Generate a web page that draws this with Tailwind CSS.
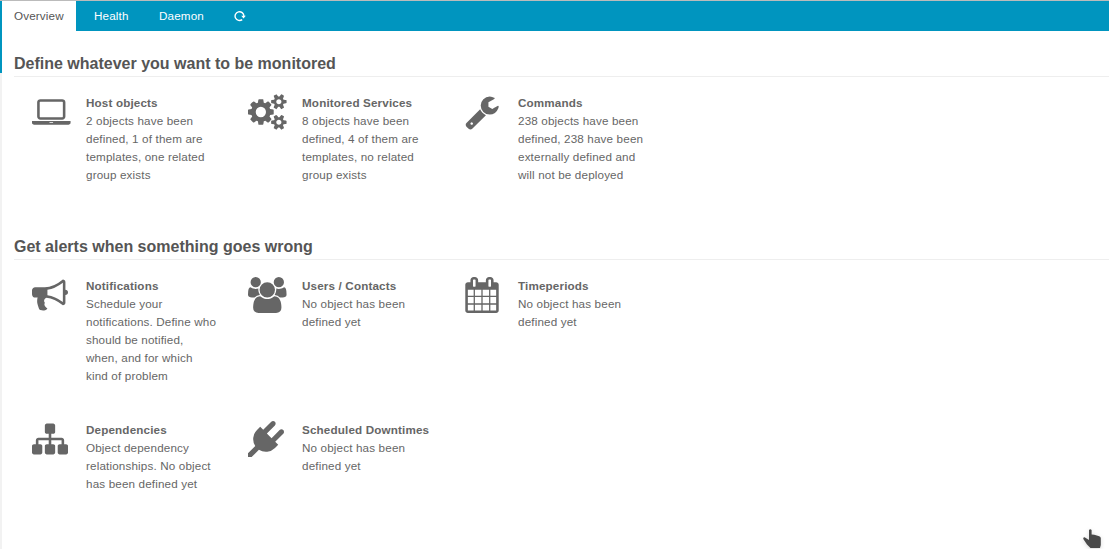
<!DOCTYPE html>
<html lang="en">
<head>
<meta charset="utf-8">
<title>Director</title>
<script src="https://cdn.jsdelivr.net/npm/@tailwindcss/browser@4"></script>
</head>
<body class="relative h-[549px] w-[1109px] overflow-hidden bg-white font-['Liberation_Sans',Arial,sans-serif] text-[#666]">
<div class="flex h-[549px] border-t border-[#bbb]">
  <div class="flex w-[2px] shrink-0 flex-col">
    <div class="h-[72px] bg-[#0095bf]"></div>
    <div class="grow bg-[#f2f2f2]"></div>
  </div>
  <div class="grow">
    <nav class="flex h-[30px] bg-[#0095bf] text-[11.67px] leading-[30px] tracking-[0.15px] text-white">
      <span class="w-[74px] bg-white pl-3 text-[#555]">Overview</span>
      <span class="w-[65px] pl-[18px]">Health</span>
      <span class="w-[75px] pl-[18px]">Daemon</span>
      <span class="flex w-12 items-center pl-[18px]">
        <svg class="h-3 w-3" viewBox="0 0 12 12" fill="none"><path d="M8.2 9.6A4.4 4.4 0 1 1 9.9 6" stroke="#fff" stroke-width="1.4"/><path d="M7.2 5.8h4.6L9.5 8.4z" fill="#fff"/></svg>
      </span>
    </nav>
    <main class="pl-3 text-[11.67px] leading-[18px] tracking-[0.15px]">
      <h2 class="h-[46px] border-b border-[#eee] pt-[23px] text-[16px] leading-[20px] font-bold tracking-normal text-[#555]">Define whatever you want to be monitored</h2>
      <div class="flex pt-[17px] pl-[18px]">
        <section class="flex h-36 w-[216px]">
          <div class="w-[54px] shrink-0"><svg class="h-9 w-[38.57px]" viewBox="64 0 1920 1792" fill="#666"><path d="M480 1280q-66 0-113-47t-47-113v-704q0-66 47-113t113-47h1088q66 0 113 47t47 113v704q0 66-47 113t-113 47h-1088zm-32-864v704q0 13 9.5 22.5t22.5 9.5h1088q13 0 22.5-9.5t9.5-22.5v-704q0-13-9.5-22.5t-22.5-9.5h-1088q-13 0-22.5 9.5t-9.5 22.5zm1376 928h160v96q0 40-47 68t-113 28h-1600q-66 0-113-28t-47-68v-96h1760zm-720 96q16 0 16-16t-16-16h-160q-16 0-16 16t16 16h160z"/></svg></div>
          <p class="whitespace-nowrap"><b>Host objects</b><br>2 objects have been<br>defined, 1 of them are<br>templates, one related<br>group exists</p>
        </section>
        <section class="flex h-36 w-[216px]">
          <div class="w-[54px] shrink-0"><svg class="h-9 w-[38.57px]" viewBox="0 0 1920 1792" fill="#666"><path d="M896 896q0-106-75-181t-181-75-181 75-75 181 75 181 181 75 181-75 75-181zm768 512q0-52-38-90t-90-38-90 38-38 90q0 53 37.5 90.5t90.5 37.5 90.5-37.5 37.5-90.5zm0-1024q0-52-38-90t-90-38-90 38-38 90q0 53 37.5 90.5t90.5 37.5 90.5-37.5 37.5-90.5zm-384 421v185q0 10-7 19.5t-16 10.5l-155 24q-11 35-32 76 34 48 90 115 7 11 7 20 0 12-7 19-23 30-82.5 89.5t-78.5 59.5q-11 0-21-7l-115-90q-37 19-77 31-11 108-23 155-7 24-30 24h-186q-11 0-20-7.5t-10-17.5l-23-153q-34-10-75-31l-118 89q-7 7-20 7-11 0-21-8-144-133-144-160 0-9 7-19 10-14 41-53t47-61q-23-44-35-82l-152-24q-10-1-17-9.5t-7-19.5v-185q0-10 7-19.5t16-10.5l155-24q11-35 32-76-34-48-90-115-7-11-7-20 0-12 7-20 22-30 82-89t79-59q11 0 21 7l115 90q34-18 77-32 11-108 23-154 7-24 30-24h186q11 0 20 7.5t10 17.5l23 153q34 10 75 31l118-89q8-7 20-7 11 0 21 8 144 133 144 160 0 8-7 19-12 16-42 54t-45 60q23 48 34 82l152 23q10 2 17 10.5t7 19.5zm640 533v140q0 16-149 31-12 27-30 52 51 113 51 138 0 4-4 7-122 71-124 71-8 0-46-47t-52-68q-20 2-30 2t-30-2q-14 21-52 68t-46 47q-2 0-124-71-4-3-4-7 0-25 51-138-18-25-30-52-149-15-149-31v-140q0-16 149-31 13-29 30-52-51-113-51-138 0-4 4-7 4-2 35-20t59-34 30-16q8 0 46 46.5t52 67.5q20-2 30-2t30 2q51-71 92-112l6-2q4 0 124 70 4 3 4 7 0 25-51 138 17 23 30 52 149 15 149 31zm0-1024v140q0 16-149 31-12 27-30 52 51 113 51 138 0 4-4 7-122 71-124 71-8 0-46-47t-52-68q-20 2-30 2t-30-2q-14 21-52 68t-46 47q-2 0-124-71-4-3-4-7 0-25 51-138-18-25-30-52-149-15-149-31v-140q0-16 149-31 13-29 30-52-51-113-51-138 0-4 4-7 4-2 35-20t59-34 30-16q8 0 46 46.5t52 67.5q20-2 30-2t30 2q51-71 92-112l6-2q4 0 124 70 4 3 4 7 0 25-51 138 17 23 30 52 149 15 149 31z"/></svg></div>
          <p class="whitespace-nowrap"><b>Monitored Services</b><br>8 objects have been<br>defined, 4 of them are<br>templates, no related<br>group exists</p>
        </section>
        <section class="flex h-36 w-[216px]">
          <div class="w-[54px] shrink-0"><svg class="h-9 w-9" viewBox="0 0 1792 1792" fill="#666"><path d="M448 1472q0-26-19-45t-45-19-45 19-19 45 19 45 45 19 45-19 19-45zm644-420l-682 682q-37 37-90 37-52 0-91-37l-106-108q-38-36-38-90 0-53 38-91l681-681q39 98 114.5 173.5t173.5 114.5zm634-435q0 39-23 106-47 134-164.5 217.5t-258.5 83.5q-185 0-316.5-131.5t-131.5-316.5 131.5-316.5 316.5-131.5q58 0 121.5 16.5t107.5 46.5q16 11 16 28t-16 28l-293 169v224l193 107q5-3 79-48.5t135.5-81 70.5-35.5q15 0 23.5 10t8.5 25z"/></svg></div>
          <p class="whitespace-nowrap"><b>Commands</b><br>238 objects have been<br>defined, 238 have been<br>externally defined and<br>will not be deployed</p>
        </section>
      </div>
      <h2 class="h-[22px] border-b border-[#eee] pt-px text-[16px] leading-[16px] font-bold tracking-normal text-[#555]">Get alerts when something goes wrong</h2>
      <div class="flex w-[700px] flex-wrap pt-[17px] pl-[18px]">
        <section class="flex h-36 w-[216px]">
          <div class="w-[54px] shrink-0"><svg class="h-9 w-9" viewBox="0 0 1792 1792" fill="#666"><path d="M1664 640q53 0 90.5 37.5t37.5 90.5-37.5 90.5-90.5 37.5v384q0 52-38 90t-90 38q-417-347-812-380-58 19-91 66t-31 100.5 40 92.5q-20 33-23 65.5t6 58 33.5 55 48 50 61.5 50.5q-29 58-111.5 83t-168.5 11.5-132-55.5q-7-23-29.5-87.5t-32-94.5-23-89-15-101 3.5-98.5 22-110.5h-122q-66 0-113-47t-47-113v-192q0-66 47-113t113-47h480q435 0 896-384 52 0 90 38t38 90v384zm-128 604v-954q-394 302-768 343v270q377 42 768 341z"/></svg></div>
          <p class="whitespace-nowrap"><b>Notifications</b><br>Schedule your<br>notifications. Define who<br>should be notified,<br>when, and for which<br>kind of problem</p>
        </section>
        <section class="flex h-36 w-[216px]">
          <div class="w-[54px] shrink-0"><svg class="h-9 w-[38.57px]" viewBox="0 0 1920 1792" fill="#666"><path d="M593 896q-162 5-265 128h-134q-82 0-138-40.5t-56-118.5q0-353 124-353 6 0 43.5 21t97.5 42.5 119 21.5q67 0 133-23-5 37-5 66 0 139 81 256zm1071 637q0 120-73 189.5t-194 69.5h-874q-121 0-194-69.5t-73-189.5q0-53 3.5-103.5t14-109 26.5-108.5 43-97.5 62-81 85.5-53.5 111.5-20q10 0 43 21.5t73 48 107 48 135 21.5 135-21.5 107-48 73-48 43-21.5q61 0 111.5 20t85.5 53.5 62 81 43 97.5 26.5 108.5 14 109 3.5 103.5zm-1024-1277q0 106-75 181t-181 75-181-75-75-181 75-181 181-75 181 75 75 181zm704 384q0 159-112.5 271.5t-271.5 112.5-271.5-112.5-112.5-271.5 112.5-271.5 271.5-112.5 271.5 112.5 112.5 271.5zm576 225q0 78-56 118.5t-138 40.5h-134q-103-123-265-128 81-117 81-256 0-29-5-66 66 23 133 23 59 0 119-21.5t97.5-42.5 43.5-21q124 0 124 353zm-128-609q0 106-75 181t-181 75-181-75-75-181 75-181 181-75 181 75 75 181z"/></svg></div>
          <p class="whitespace-nowrap"><b>Users / Contacts</b><br>No object has been<br>defined yet</p>
        </section>
        <section class="flex h-36 w-[216px]">
          <div class="w-[54px] shrink-0"><svg class="h-9 w-9" viewBox="0 0 1792 1792" fill="#666"><path d="M192 1664h288v-288h-288v288zm352 0h320v-288h-320v288zm-352-352h288v-320h-288v320zm352 0h320v-320h-320v320zm-352-384h288v-288h-288v288zm736 736h320v-288h-320v288zm-384-736h320v-288h-320v288zm768 736h288v-288h-288v288zm-384-352h320v-320h-320v320zm-352-864v-288q0-13-9.5-22.5t-22.5-9.5h-64q-13 0-22.5 9.5t-9.5 22.5v288q0 13 9.5 22.5t22.5 9.5h64q13 0 22.5-9.5t9.5-22.5zm736 864h288v-320h-288v320zm-384-384h320v-288h-320v288zm384 0h288v-288h-288v288zm32-480v-288q0-13-9.5-22.5t-22.5-9.5h-64q-13 0-22.5 9.5t-9.5 22.5v288q0 13 9.5 22.5t22.5 9.5h64q13 0 22.5-9.5t9.5-22.5zm384-64v1280q0 52-38 90t-90 38h-1408q-52 0-90-38t-38-90v-1280q0-52 38-90t90-38h128v-96q0-66 47-113t113-47h64q66 0 113 47t47 113v96h384v-96q0-66 47-113t113-47h64q66 0 113 47t47 113v96h128q52 0 90 38t38 90z"/></svg></div>
          <p class="whitespace-nowrap"><b>Timeperiods</b><br>No object has been<br>defined yet</p>
        </section>
        <section class="flex h-[108px] w-[216px]">
          <div class="w-[54px] shrink-0"><svg class="h-9 w-9" viewBox="0 0 1792 1792" fill="#666"><path d="M1792 1248v320q0 40-28 68t-68 28h-320q-40 0-68-28t-28-68v-320q0-40 28-68t68-28h96v-192h-512v192h96q40 0 68 28t28 68v320q0 40-28 68t-68 28h-320q-40 0-68-28t-28-68v-320q0-40 28-68t68-28h96v-192h-512v192h96q40 0 68 28t28 68v320q0 40-28 68t-68 28h-320q-40 0-68-28t-28-68v-320q0-40 28-68t68-28h96v-192q0-52 38-90t90-38h512v-192h-96q-40 0-68-28t-28-68v-320q0-40 28-68t68-28h320q40 0 68 28t28 68v320q0 40-28 68t-68 28h-96v192h512q52 0 90 38t38 90v192h96q40 0 68 28t28 68z"/></svg></div>
          <p class="whitespace-nowrap"><b>Dependencies</b><br>Object dependency<br>relationships. No object<br>has been defined yet</p>
        </section>
        <section class="flex h-[108px] w-[216px]">
          <div class="w-[54px] shrink-0"><svg class="h-9 w-9" viewBox="0 0 1792 1792" fill="#666"><path d="M1755 453q37 38 37 90.5t-37 90.5l-401 400 150 150-160 160q-163 163-389.5 186.5t-411.5-100.5l-362 362h-181v-181l362-362q-124-185-100.5-411.5t186.5-389.5l160-160 150 150 400-401q38-37 91-37t90 37 37 90.5-37 90.5l-400 401 234 234 401-400q38-37 91-37t90 37z"/></svg></div>
          <p class="whitespace-nowrap"><b>Scheduled Downtimes</b><br>No object has been<br>defined yet</p>
        </section>
      </div>
    </main>
  </div>
</div>
<svg class="absolute top-[527px] left-[1081px] h-[22px] w-[22px] drop-shadow-sm" viewBox="0 0 22 22" fill="#4a4a4a"><path d="M8 3q1.3-1.6 2.6 0v4.6l2.6.2 2.6.8 2.4.6q1.6.6 1.6 2V18l-.8 3H9.5L6 17.5 2.3 12q-.3-1.6 1.3-1.7L8 13z"/></svg>
</body>
</html>
